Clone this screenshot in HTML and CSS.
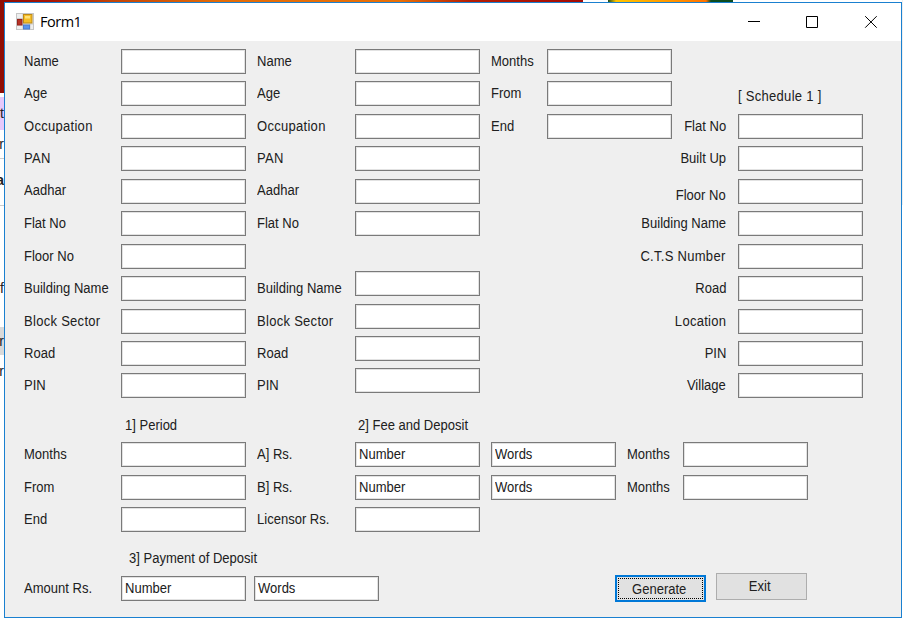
FILE: index.html
```
<!DOCTYPE html>
<html lang="en">
<head>
<meta charset="utf-8">
<title>Form1</title>
<link rel="stylesheet" href="styles.css">
</head>
<body>
<div class="desktop">
  <div class="photo photo-left"></div>
  <div class="photo photo-right"></div>
  <div class="behind">
    <div class="frag lilac">t</div>
    <div class="frag f2">r</div>
    <div class="frag f3">a</div>
    <div class="frag f4">f</div>
    <div class="frag f5">r</div>
    <div class="frag f6">r</div>
  </div>
  <div class="behind-right"></div>
  <main class="window">
    <header class="titlebar">
      <svg class="app-icon" width="18" height="18" viewBox="0 0 18 18">
        <rect x=".5" y=".5" width="17" height="16" fill="#eee" stroke="#c6c6c6"/>
        <path d="M7 1v15M1 5.500h6M1 12h6M7 11h10M14 11v5" stroke="#c9c9c9" fill="none"/>
        <rect x="1.500" y="6.500" width="4.500" height="5.500" fill="#b83227" stroke="#96241c"/>
        <rect x="7.500" y="1.500" width="8.500" height="8.500" fill="#f6bd26" stroke="#bd8a19"/>
        <rect x="9" y="3" width="5" height="2.500" fill="#ffe178"/>
        <rect x="7.500" y="12" width="6" height="4" fill="#5a94ef" stroke="#4b7dd0"/>
      </svg>
      <span class="title">Form1</span>
      <svg class="controls" width="130" height="14" viewBox="0 0 130 14" fill="none" stroke="#000">
        <path d="M0 6.500h12M58.500 1.500h11v11h-11zM117.200 1.200l11.500 11.500M128.700 1.200l-11.500 11.500"/>
      </svg>
    </header>
    <section class="upper">
      <div class="stack a">
        <label class="row"><span>Name</span><input></label>
        <label class="row"><span>Age</span><input></label>
        <label class="row"><span class="wide">Occupation</span><input></label>
        <label class="row"><span class="wide">PAN</span><input></label>
        <label class="row raised"><span>Aadhar</span><input></label>
        <label class="row"><span>Flat No</span><input></label>
        <label class="row"><span>Floor No</span><input></label>
        <label class="row"><span>Building Name</span><input></label>
        <label class="row"><span class="wide">Block Sector</span><input></label>
        <label class="row"><span>Road</span><input></label>
        <label class="row"><span>PIN</span><input></label>
      </div>
      <div class="stack b">
        <label class="row"><span>Name</span><input></label>
        <label class="row"><span>Age</span><input></label>
        <label class="row"><span class="wide">Occupation</span><input></label>
        <label class="row"><span class="wide">PAN</span><input></label>
        <label class="row raised"><span>Aadhar</span><input></label>
        <label class="row"><span>Flat No</span><input></label>
        <div class="stack address">
          <label class="row"><span>Building Name</span><input></label>
          <label class="row"><span class="wide">Block Sector</span><input></label>
          <label class="row"><span>Road</span><input></label>
          <label class="row"><span>PIN</span><input></label>
        </div>
      </div>
      <div class="stack c">
        <label class="row"><span>Months</span><input></label>
        <label class="row"><span>From</span><input></label>
        <label class="row"><span>End</span><input></label>
      </div>
      <div class="stack d">
        <div class="heading schedule"><span class="wide">[ Schedule 1 ]</span></div>
        <label class="row"><span>Flat No</span><input></label>
        <label class="row"><span>Built Up</span><input></label>
        <label class="row lowered"><span>Floor No</span><input></label>
        <label class="row"><span>Building Name</span><input></label>
        <label class="row"><span class="wide">C.T.S Number</span><input></label>
        <label class="row"><span>Road</span><input></label>
        <label class="row"><span class="wide">Location</span><input></label>
        <label class="row"><span>PIN</span><input></label>
        <label class="row"><span>Village</span><input></label>
      </div>
    </section>
    <section class="middle">
      <div class="stack a">
        <div class="heading period"><span>1] Period</span></div>
        <label class="row"><span>Months</span><input></label>
        <label class="row"><span>From</span><input></label>
        <label class="row"><span>End</span><input></label>
      </div>
      <div class="stack fees">
        <div class="heading fee"><span>2] Fee and Deposit</span></div>
        <div class="fee-row"><span>A] Rs.</span><div class="box"><span>Number</span></div><div class="box"><span>Words</span></div><span>Months</span><input></div>
        <div class="fee-row"><span>B] Rs.</span><div class="box"><span>Number</span></div><div class="box"><span>Words</span></div><span>Months</span><input></div>
        <div class="fee-row"><span>Licensor Rs.</span><input></div>
      </div>
    </section>
    <section class="bottom">
      <div class="heading payment"><span>3] Payment of Deposit</span></div>
      <div class="pay-row">
        <span class="amount">Amount Rs.</span>
        <div class="box"><span>Number</span></div>
        <div class="box"><span>Words</span></div>
        <button class="generate"><span>Generate</span></button>
        <button class="exit"><span>Exit</span></button>
      </div>
    </section>
  </main>
</div>
</body>
</html>
```
FILE: styles.css
```
* { box-sizing: border-box; }
body { margin: 0; font-family: "Liberation Sans", Arial, sans-serif; }
.desktop { position: relative; width: 903px; height: 625px; overflow: hidden; background: #fff; }
.photo { position: absolute; top: 0; }
.photo-left { left: 0; width: 583px; height: 93px; background: linear-gradient(90deg, #8f0d05 0, #a81505 50px, #c24408 110px, #e36c08 220px, #e87008 400px, #b41e05 470px, #a40b05 583px); }
.photo-right { left: 608px; width: 125px; height: 3px; background: linear-gradient(90deg, #184a18 0, #ffc400 8px, #ff9800 60px, #ff7200 98px, #0c4c20 103px, #0c4c20 125px); }
.behind { position: absolute; left: 0; top: 97px; width: 4px; overflow: hidden; font-size: 14px; line-height: 33px; color: #222; }
.frag { height: 33px; direction: rtl; }
.lilac { background: #e6c8fb; }
.f2 { height: 29px; line-height: 29px; border-bottom: 1px solid #ccc; }
.f3 { height: 47px; line-height: 42px; border-bottom: 1px solid #ccc; font-weight: bold; }
.f4 { height: 121px; line-height: 164px; }
.f5 { height: 28px; line-height: 28px; background: #d9d9d9; }
.f6 { height: 28px; }
.behind-right { position: absolute; right: 0; top: 0; width: 1px; height: 205px; background: #eee; }
.window { position: absolute; left: 4px; top: 2px; width: 898px; height: 616px; border: 1px solid #1a80d0; background: #efefef; font-size: 14px; line-height: 25px; color: #202020; }
.titlebar { display: flex; align-items: center; height: 38px; background: #fff; padding: 0 23px 0 11px; }
.title { margin: -2px 0 0 6px; font: 14.500px "Open Sans", sans-serif; letter-spacing: -.5px; color: #000; }
.controls { margin-left: auto; }
.upper { display: flex; height: 367px; padding: 8px 0 0 19px; }
.stack { display: flex; flex-direction: column; gap: 7.45px; }
.a { width: 233px; }
.b { width: 234px; }
.c { width: 181px; }
.row { display: grid; grid-template-columns: 97px 125px; height: 25px; }
.a .row { grid-template-columns: 97px 125px; }
.b .row { grid-template-columns: 98px 125px; }
.c .row { grid-template-columns: 56px 125px; }
.address { margin-top: 27.500px; }
.address .row > span { padding-top: 5px; }
.row > span, .heading > span, .fee-row > span, .box > span, button > span, .amount { transform: scaleX(.93); transform-origin: left; white-space: nowrap; }
.row > .wide, .heading > .wide { letter-spacing: .3px; }
.heading > span { display: inline-block; }
input, .box { width: 125px; height: 25px; margin: 0; padding: 0 3px; border: 1px solid #7a7a7a; border-radius: 0; background: #fff; outline: none; box-shadow: inset 0 0 0 1px #e2e2e2; }
.box > span { display: block; line-height: 23px; }
.raised > span { margin-top: -1px; }
.d { width: 191px; padding-top: 65px; }
.d .row { grid-template-columns: 54px 125px; column-gap: 12px; }
.d .row > span { justify-self: end; transform-origin: right; }
.lowered > span { padding-top: 4px; }
.schedule { height: 25px; margin: -30px 0 -2.500px 66px; }
.middle { display: flex; padding-left: 19px; height: 133px; }
.heading { height: 25px; }
.period { margin: 5px 0 -3px 101px; }
.fee { margin: 5px 0 -3px 101px; }
.fee-row { display: grid; grid-template-columns: 98px 136px 136px 56px 125px; height: 25px; }
.bottom { padding-left: 19px; padding-top: 1px; }
.payment { margin-left: 105px; height: 30px; line-height: 33px; }
.pay-row { display: flex; align-items: center; margin-top: 4px; height: 25px; }
.amount { width: 97px; }
.pay-row .box { margin-right: 8px; }
button { width: 91px; height: 27px; padding: 0; font: inherit; color: inherit; background: #e1e1e1; border: 1px solid #adadad; }
button > span { display: inline-block; margin-left: -3px; transform-origin: center; }
.generate { margin-left: 228px; border: 2px solid #0078d7; outline: 1px dotted #000; outline-offset: -4px; }
.exit { margin: -4px 0 0 10px; }
```
